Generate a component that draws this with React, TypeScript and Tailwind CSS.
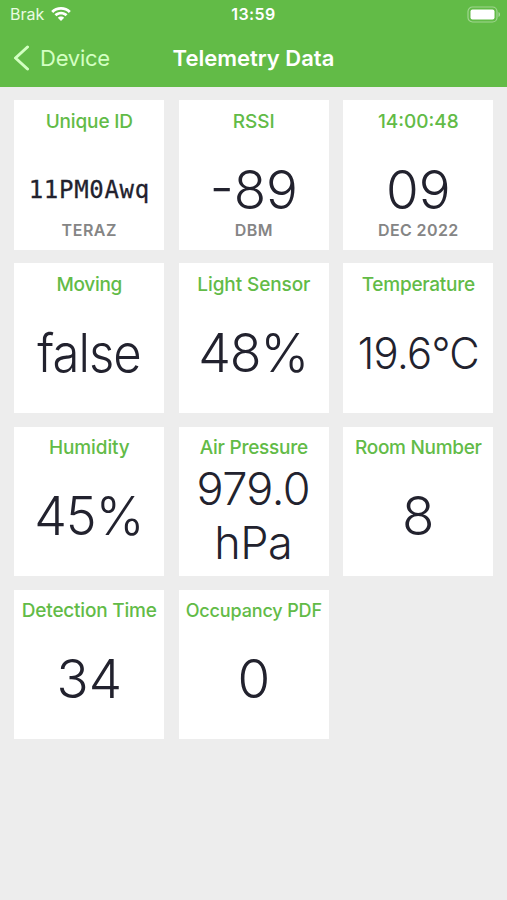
import React from 'react';
import { clsx } from 'clsx';

interface Tile {
  title: string;
  titleClass?: string;
  value: string;
  valueClass?: string;
  caption?: string;
  captionClass?: string;
}

const tiles: Tile[] = [
  {
    title: 'Unique ID',
    titleClass: 'text-[19px] tracking-[-0.15px]',
    value: '11PM0Awq',
    valueClass: 'font-["DejaVu_Sans_Mono","Liberation_Mono",monospace] text-[24px] leading-[30px] tracking-[0.7px] [-webkit-text-stroke:0.3px_#22222e]',
    caption: 'TERAZ',
    captionClass: 'text-[16px] tracking-[0.55px]',
  },
  { title: 'RSSI', value: '-89', caption: 'DBM', captionClass: 'text-[16px] tracking-[0.4px]' },
  { title: '14:00:48', value: '09', caption: 'DEC 2022', captionClass: 'text-[16px] tracking-[0.4px]' },
  { title: 'Moving', titleClass: 'text-[19px] tracking-[-0.3px]', value: 'false', valueClass: 'text-[53px] leading-[56px] tracking-[-1px] scale-x-[0.925]' },
  { title: 'Light Sensor', titleClass: 'text-[19px] tracking-[-0.1px]', value: '48%', valueClass: 'text-[53px] leading-[56px] tracking-[-1px] scale-x-[0.98] pr-[2px]' },
  { title: 'Temperature', titleClass: 'text-[19px] tracking-[-0.25px]', value: '19.6°C', valueClass: 'text-[43px] tracking-[-0.7px] scale-x-[0.97]' },
  { title: 'Humidity', titleClass: 'text-[19px] tracking-[-0.1px]', value: '45%', valueClass: 'text-[53px] leading-[56px] tracking-[-1px] scale-x-[0.98] pr-[2px]' },
  { title: 'Air Pressure', titleClass: 'text-[19px] tracking-[-0.25px]', value: '979.0 hPa', valueClass: 'text-[45px] leading-[54px] tracking-[-0.5px] pr-px' },
  { title: 'Room Number', titleClass: 'text-[19px] tracking-[-0.3px]', value: '8' },
  { title: 'Detection Time', titleClass: 'text-[19px] tracking-[-0.2px]', value: '34' },
  { title: 'Occupancy PDF', titleClass: 'text-[18px] tracking-[-0.15px]', value: '0' },
];

const WifiIcon = () => (
  <svg width="20" height="15" viewBox="0 0 20 15" fill="white">
    <path d="M10 0C6.2 0 2.700 1.500 0.200 3.900L2.200 5.900C4.200 4 7 2.800 10 2.800S15.800 4 17.800 5.900L19.800 3.900C17.300 1.500 13.800 0 10 0Z" />
    <path d="M10 4.800C7.500 4.800 5.200 5.800 3.500 7.300L5.500 9.300C6.700 8.200 8.300 7.600 10 7.600S13.300 8.200 14.500 9.300L16.500 7.300C14.800 5.800 12.500 4.800 10 4.800Z" />
    <path d="M10 9.400C8.800 9.400 7.600 9.900 6.800 10.700L10 14L13.200 10.700C12.400 9.900 11.200 9.400 10 9.400Z" />
  </svg>
);

const BatteryIcon = () => (
  <svg width="34" height="18" viewBox="0 0 34 18" fill="none">
    <rect x="1" y="1" width="29" height="15" rx="4.500" stroke="white" strokeOpacity="0.4" strokeWidth="1.200" />
    <rect x="3.500" y="3.500" width="24" height="10" rx="2" fill="white" />
    <path d="M31.500 6V11C32.500 10.600 33 9.700 33 8.500S32.500 6.400 31.500 6Z" fill="white" fillOpacity="0.45" />
  </svg>
);

const Header: React.FC = () => (
  <header className="h-[87.4px] bg-[#62bb47] text-white">
    {/* Status bar */}
    <div className="grid h-[29px] grid-cols-3 items-center text-[16px]">
      <div className="flex h-[29px] items-center gap-[7px] pl-[10px] text-[#e9fbe2]">
        <span className="leading-[29px]">Brak</span>
        <WifiIcon />
      </div>
      <span className="h-[29px] text-center font-semibold leading-[29px] tracking-[0.4px]">13:59</span>
      <div className="flex justify-end pr-[6px]">
        <BatteryIcon />
      </div>
    </div>

    {/* Navigation bar */}
    <div className="grid h-[58px] grid-cols-[1fr_auto_1fr] items-center">
      <button className="flex items-center gap-[11px] pl-[13px] text-[#d3ffc2]">
        <svg width="16" height="26" viewBox="0 0 16 26" fill="none" stroke="currentColor" strokeWidth="3" strokeLinecap="round" strokeLinejoin="round">
          <path d="M14.500 2L2.500 13L14.500 24" />
        </svg>
        <span className="text-[22px] font-normal leading-[58px] tracking-[-0.25px]">Device</span>
      </button>
      <h1 className="text-[22px] font-semibold leading-[58px]">Telemetry Data</h1>
      <span />
    </div>
  </header>
);

const TelemetryTile: React.FC<Tile> = ({ title, titleClass, value, valueClass, caption, captionClass }) => (
  <div className="grid h-[149.5px] grid-rows-[41px_97px_11.5px] bg-white text-center">
    <h2 className={clsx('h-[41px] whitespace-nowrap pt-[0.5px] font-medium leading-[41px] text-[#62bb47]', titleClass || 'text-[19px]')}>{title}</h2>
    <div className="flex h-[97px] items-center justify-center">
      <span className={clsx('font-light text-[#22222e]', valueClass || 'text-[53px] leading-[56px]')}>{value}</span>
    </div>
    {caption && (
      <p className={clsx('-mt-[18px] font-semibold leading-[20px] text-[#858585]', captionClass || 'text-[16px] tracking-[0.8px]')}>{caption}</p>
    )}
  </div>
);

export default function App() {
  return (
    <div className="h-[900px] w-[507px] overflow-hidden bg-[#ededed] font-[Inter,sans-serif]">
      <Header />
      <main className="grid grid-cols-[150px_150px_150px] gap-x-[14.5px] gap-y-[13.7px] pl-[14.3px] pt-[12.8px]">
        {tiles.map((tile) => (
          <TelemetryTile key={tile.title} {...tile} />
        ))}
      </main>
    </div>
  );
}
